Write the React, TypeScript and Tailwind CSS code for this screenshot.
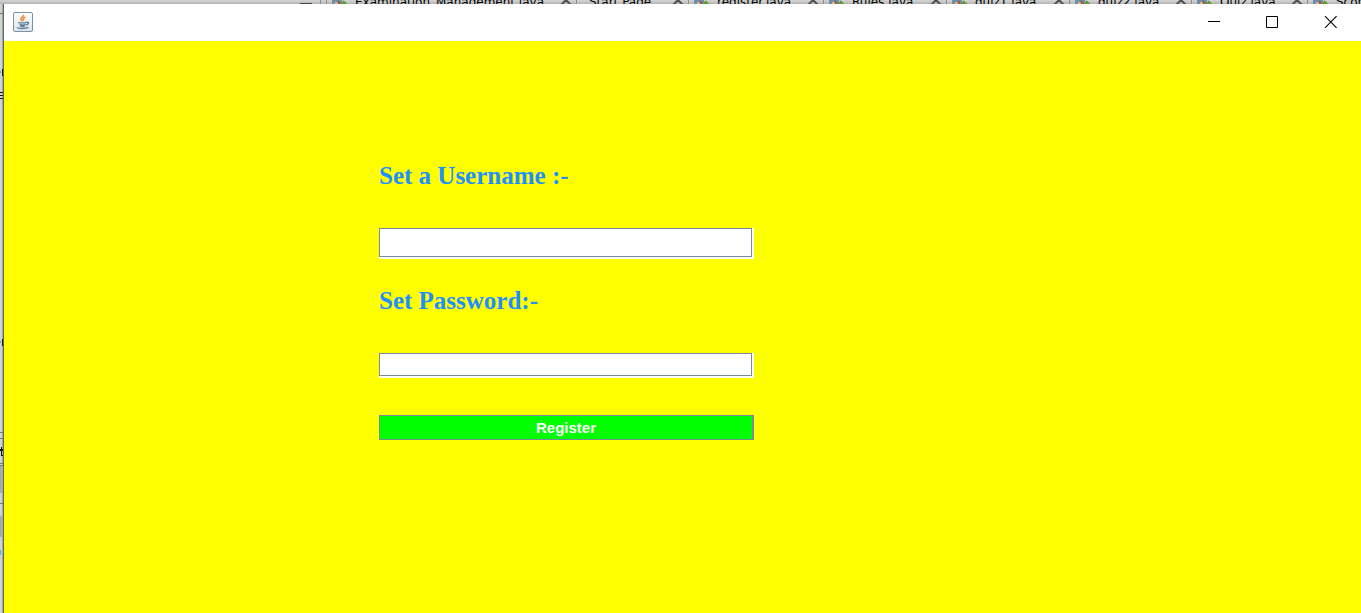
import React from "react";

type Tab = { name: string; width: string; file: boolean };

const tabs: Tab[] = [
  { name: "Examination_Management.java", width: "w-[250px]", file: true },
  { name: "Start Page", width: "w-[112px]", file: false },
  { name: "register.java", width: "w-[135px]", file: true },
  { name: "Rules.java", width: "w-[123px]", file: true },
  { name: "quiz1.java", width: "w-[123px]", file: true },
  { name: "quiz2.java", width: "w-[122px]", file: true },
  { name: "Quiz.java", width: "w-[116px]", file: true },
  { name: "Score.java", width: "w-[123px]", file: true },
];

function FileIcon() {
  return (
    <svg className="h-4 w-5 shrink-0" viewBox="0 0 20 16" aria-hidden="true">
      <path d="M1 5h10v7H1z" fill="#6d8fae" />
      <path d="M4 8h3v4H4z" fill="#d9b98a" />
      <path d="M7 7l3 5" stroke="#a0553a" strokeWidth="2" />
      <path d="M12 7l6 6M12 8v4" stroke="#5f9e2e" strokeWidth="2" />
    </svg>
  );
}

function EditorTabs() {
  return (
    <div className="flex h-1 shrink-0 items-end overflow-hidden bg-linear-to-b from-[#d6d6d6] to-[#b4b4b4] font-['DejaVu_Sans',sans-serif] text-xs leading-4 text-black">
      <div className="flex h-4 w-[327px] shrink-0 items-end justify-end gap-2">
        <span className="h-px w-3 bg-[#444444]" />
        <span className="h-4 w-[7px] border-x border-[#8c8c8c]" />
      </div>
      {tabs.map((tab) => (
        <div
          key={tab.name}
          className={`${tab.width} -mb-1.5 flex h-4 shrink-0 items-center border-r border-[#8c8c8c] pr-1 ${tab.file ? "gap-1 pl-1" : "pl-3"}`}
        >
          {tab.file && <FileIcon />}
          <span className="whitespace-nowrap">{tab.name}</span>
          <svg className="ml-auto h-4 w-3 shrink-0" viewBox="0 0 12 16" aria-hidden="true">
            <path d="M1 11l5-5 5 5" fill="none" stroke="#505050" strokeWidth="2" />
          </svg>
        </div>
      ))}
    </div>
  );
}

function EditorEdge() {
  return (
    <div className="flex w-1 shrink-0 flex-col overflow-hidden border-r border-[#59704c] bg-linear-to-r from-[#d2d2d2] from-50% to-[#8b929b]">
      <svg className="h-[609px] w-[3px] shrink-0" viewBox="0 0 3 609" aria-hidden="true">
        <path d="M0 9.500h3M0 428.500h3M0 434.500h3M0 459.500h3M0 461.500h3M0 499.500h3" stroke="#777777" />
        <path d="M0 462h3v27H0zM0 512h3v21H0z" fill="#aaaaaa" />
        <path d="M2 65h1v7H2zM0 88h3v1H0zM0 91h3v1H0zM0 94h3v1H0zM2 335h1v7H2z" fill="#241010" />
        <path d="M0 67h1v2H0zM0 337h1v2H0zM0 546h1v5H0z" fill="#55aadd" />
        <path d="M0 445h3v2H0zM1 443h1v9H1zM1 451h2v1H1z" fill="#111111" />
      </svg>
    </div>
  );
}

function JavaIcon() {
  return (
    <svg className="h-5 w-5" viewBox="0 0 20 20" aria-hidden="true">
      <defs>
        <linearGradient id="tile" x1="0" y1="0" x2="0" y2="1">
          <stop offset="0" stopColor="#ffffff" />
          <stop offset="1" stopColor="#dfe3e7" />
        </linearGradient>
      </defs>
      <rect x="0.500" y="0.500" width="19" height="19" rx="1.500" fill="url(#tile)" stroke="#7893a8" />
      <path d="M10.500 2.800c.5 2-3.300 3-2.600 4.600.3.900 1.200 1.100 1.200 1.900M12.300 5c-2.200 1-2.600 2.200-1.500 3.800" fill="none" stroke="#ec8f45" strokeWidth="1.700" />
      <path d="M5.300 10.300c1.500.8 6.500.8 8 0M6.500 12.300c1.500.7 4.500.7 6 0M7 13.800c1.300.7 3.700.7 5 0M13.500 10.300c2.800-.7 2.600 2-.6 2.800M4.300 15.300c0 1.600 9 1.600 11 0" fill="none" stroke="#5f7f9c" strokeWidth="1.400" />
    </svg>
  );
}

function TitleBar() {
  const control = "flex h-9 w-[58px] items-center justify-center";
  return (
    <header className="flex h-[37px] shrink-0 items-start justify-between bg-white">
      <div className="pt-2 pl-[9px]">
        <JavaIcon />
      </div>
      <div className="flex pr-0.5 text-black">
        <button type="button" aria-label="Minimize" className={control}>
          <svg className="h-3 w-3" viewBox="0 0 12 12" fill="none" stroke="currentColor">
            <path d="M0 5.500h12" />
          </svg>
        </button>
        <button type="button" aria-label="Maximize" className={control}>
          <svg className="h-3 w-3" viewBox="0 0 12 12" fill="none" stroke="currentColor">
            <path d="M.5.500h11v11H.5z" />
          </svg>
        </button>
        <button type="button" aria-label="Close" className={control}>
          <svg className="h-3 w-3 overflow-visible" viewBox="0 0 12 12" fill="none" stroke="currentColor">
            <path d="M1 .200l11.600 11.600M12.600.200L1 11.800" strokeWidth="1.100" />
          </svg>
        </button>
      </div>
    </header>
  );
}

function Field({ id, label, type, height }: { id: string; label: string; type: string; height: string }) {
  return (
    <div className="flex flex-col gap-9">
      <label htmlFor={id} className="font-['Liberation_Serif',serif] text-[25px] leading-8 font-bold whitespace-nowrap text-[#1e90ff]">
        {label}
      </label>
      <div className={`${height} flex bg-white pr-0.5 pb-0.5`}>
        <input id={id} type={type} className="w-full min-w-0 border border-[#7a8a99] bg-white px-1 text-sm text-black outline-none" />
      </div>
    </div>
  );
}

export default function App() {
  return (
    <div className="flex min-h-screen flex-col overflow-hidden">
      <EditorTabs />
      <div className="flex flex-1">
        <EditorEdge />
        <div className="flex min-w-0 flex-1 flex-col bg-[#ffff00]">
          <TitleBar />
          <form className="ml-[375px] flex w-[375px] flex-col pt-[119px]" onSubmit={(e) => e.preventDefault()}>
            <div className="flex flex-col gap-[26px]">
              <Field id="username" label="Set a Username :-" type="text" height="h-[31px]" />
              <Field id="password" label="Set Password:-" type="password" height="h-[25px]" />
            </div>
            <button
              type="submit"
              className="mt-[37px] h-[25px] border border-r-2 border-[#7a8a99] bg-[#00ff00] font-['Liberation_Sans',sans-serif] text-[15px] leading-6 font-bold text-white"
            >
              Register
            </button>
          </form>
        </div>
      </div>
    </div>
  );
}
